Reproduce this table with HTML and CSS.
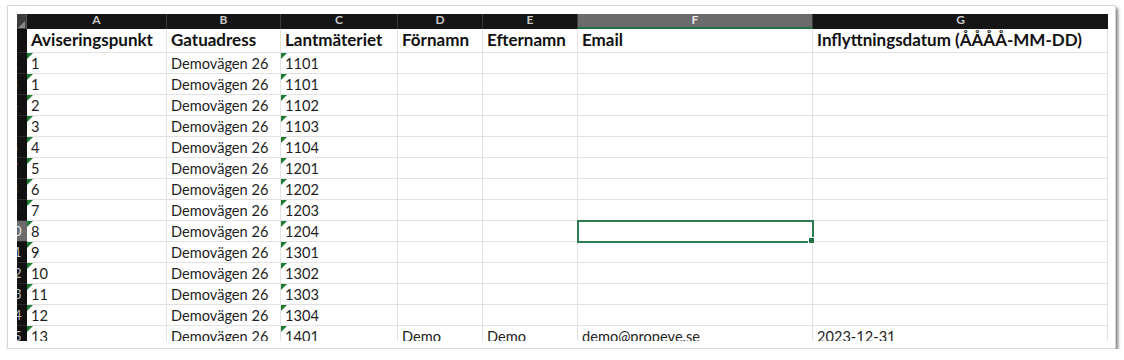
FILE: index.html
```html
<!DOCTYPE html>
<html lang="sv">
<head>
<meta charset="utf-8">
<title>Aviseringspunkter</title>
<link rel="stylesheet" href="styles.css">
</head>
<body>
<div class="card">
  <div class="sheet">
    <div class="grid">
      <div class="corner"></div>
      <div class="colhead">A</div>
      <div class="colhead">B</div>
      <div class="colhead">C</div>
      <div class="colhead">D</div>
      <div class="colhead">E</div>
      <div class="colhead sel">F</div>
      <div class="colhead last">G</div>

      <div class="rowhead"><span>1</span></div>
      <div class="cell hd">Aviseringspunkt</div>
      <div class="cell hd">Gatuadress</div>
      <div class="cell hd">Lantmäteriet</div>
      <div class="cell hd">Förnamn</div>
      <div class="cell hd">Efternamn</div>
      <div class="cell hd">Email</div>
      <div class="cell hd">Inflyttningsdatum (ÅÅÅÅ-MM-DD)</div>

      <div class="rowhead"><span>2</span></div>
      <div class="cell tx">1</div><div class="cell">Demovägen 26</div><div class="cell tx">1101</div><div class="cell"></div><div class="cell"></div><div class="cell"></div><div class="cell"></div>

      <div class="rowhead"><span>3</span></div>
      <div class="cell tx">1</div><div class="cell">Demovägen 26</div><div class="cell tx">1101</div><div class="cell"></div><div class="cell"></div><div class="cell"></div><div class="cell"></div>

      <div class="rowhead"><span>4</span></div>
      <div class="cell tx">2</div><div class="cell">Demovägen 26</div><div class="cell tx">1102</div><div class="cell"></div><div class="cell"></div><div class="cell"></div><div class="cell"></div>

      <div class="rowhead"><span>5</span></div>
      <div class="cell tx">3</div><div class="cell">Demovägen 26</div><div class="cell tx">1103</div><div class="cell"></div><div class="cell"></div><div class="cell"></div><div class="cell"></div>

      <div class="rowhead"><span>6</span></div>
      <div class="cell tx">4</div><div class="cell">Demovägen 26</div><div class="cell tx">1104</div><div class="cell"></div><div class="cell"></div><div class="cell"></div><div class="cell"></div>

      <div class="rowhead"><span>7</span></div>
      <div class="cell tx">5</div><div class="cell">Demovägen 26</div><div class="cell tx">1201</div><div class="cell"></div><div class="cell"></div><div class="cell"></div><div class="cell"></div>

      <div class="rowhead"><span>8</span></div>
      <div class="cell tx">6</div><div class="cell">Demovägen 26</div><div class="cell tx">1202</div><div class="cell"></div><div class="cell"></div><div class="cell"></div><div class="cell"></div>

      <div class="rowhead"><span>9</span></div>
      <div class="cell tx">7</div><div class="cell">Demovägen 26</div><div class="cell tx">1203</div><div class="cell"></div><div class="cell"></div><div class="cell"></div><div class="cell"></div>

      <div class="rowhead sel"><span>10</span></div>
      <div class="cell tx">8</div><div class="cell">Demovägen 26</div><div class="cell tx">1204</div><div class="cell"></div><div class="cell"></div><div class="cell active"></div><div class="cell"></div>

      <div class="rowhead"><span>11</span></div>
      <div class="cell tx">9</div><div class="cell">Demovägen 26</div><div class="cell tx">1301</div><div class="cell"></div><div class="cell"></div><div class="cell"></div><div class="cell"></div>

      <div class="rowhead"><span>12</span></div>
      <div class="cell tx">10</div><div class="cell">Demovägen 26</div><div class="cell tx">1302</div><div class="cell"></div><div class="cell"></div><div class="cell"></div><div class="cell"></div>

      <div class="rowhead"><span>13</span></div>
      <div class="cell tx">11</div><div class="cell">Demovägen 26</div><div class="cell tx">1303</div><div class="cell"></div><div class="cell"></div><div class="cell"></div><div class="cell"></div>

      <div class="rowhead"><span>14</span></div>
      <div class="cell tx">12</div><div class="cell">Demovägen 26</div><div class="cell tx">1304</div><div class="cell"></div><div class="cell"></div><div class="cell"></div><div class="cell"></div>

      <div class="rowhead"><span>15</span></div>
      <div class="cell tx">13</div><div class="cell">Demovägen 26</div><div class="cell tx">1401</div><div class="cell">Demo</div><div class="cell">Demo</div><div class="cell">demo@propeve.se</div><div class="cell">2023-12-31</div>
    </div>
  </div>
</div>
</body>
</html>
```
FILE: styles.css
```css
* { box-sizing: border-box; }

html, body {
  margin: 0;
  padding: 0;
  background: #ffffff;
}

body {
  font-family: Lato, "Open Sans", "Liberation Sans", sans-serif;
  color: #222;
}

.card {
  margin: 5px 0 0 7px;
  width: 1109px;
  height: 344px;
  border: 1px solid #d6d6d6;
  box-shadow: 2px 3px 3px rgba(0, 0, 0, 0.5);
  padding: 8px 7px 6px 9px;
  background: #fff;
}

.sheet {
  width: 1091px;
  height: 327px;
  overflow: hidden;
}

.grid {
  display: grid;
  grid-template-columns: 10px 140px 114px 117px 85px 95px 235px 295px;
  grid-template-rows: 15px 24px repeat(14, 21px);
}

.corner {
  background: #3c3c3c;
  border-right: 1px solid #555;
  position: relative;
}
.corner::after {
  content: "";
  position: absolute;
  right: 1px;
  bottom: 1px;
  border-left: 7px solid transparent;
  border-bottom: 7px solid #8a8a8a;
}

.colhead {
  background: #151515;
  color: #c9c9c9;
  font-size: 12px;
  font-weight: 700;
  line-height: 12px;
  text-align: center;
  border-right: 1px solid #3a3a3a;
}
.colhead.sel {
  background: #6b6b6b;
  color: #e6e6e6;
  border-bottom: 2px solid #217346;
}
.colhead.last {
  border-right: none;
}

.rowhead {
  background: #111;
  color: #bdbdbd;
  font-size: 13px;
  overflow: hidden;
  display: flex;
  align-items: center;
  border-bottom: 1px solid #2a2a2a;
}
.rowhead span {
  display: block;
  flex: 0 0 26px;
  margin-left: -16px;
  text-align: center;
}
.rowhead.sel {
  background: #6b6b6b;
  color: #e8e8e8;
}

.cell {
  border-right: 1px solid #e2e2e2;
  border-bottom: 1px solid #e2e2e2;
  padding: 0 0 1px 4px;
  font-size: 14.6px;
  line-height: 16px;
  white-space: nowrap;
  overflow: hidden;
  display: flex;
  align-items: flex-end;
  color: #1e1e1e;
  position: relative;
}

.cell.hd {
  font-weight: 700;
  font-size: 17px;
  line-height: 20px;
  align-items: center;
  color: #111;
}

.cell.tx::before {
  content: "";
  position: absolute;
  left: 0;
  top: 0;
  border-top: 6px solid #1e7b34;
  border-right: 6px solid transparent;
}

.cell.active {
  outline: 2px solid #2e7d4f;
  outline-offset: -1px;
  overflow: visible;
  z-index: 2;
}
.cell.active::after {
  content: "";
  position: absolute;
  right: -3px;
  bottom: -3px;
  width: 5px;
  height: 5px;
  background: #217346;
  border: 1px solid #fff;
}
```
